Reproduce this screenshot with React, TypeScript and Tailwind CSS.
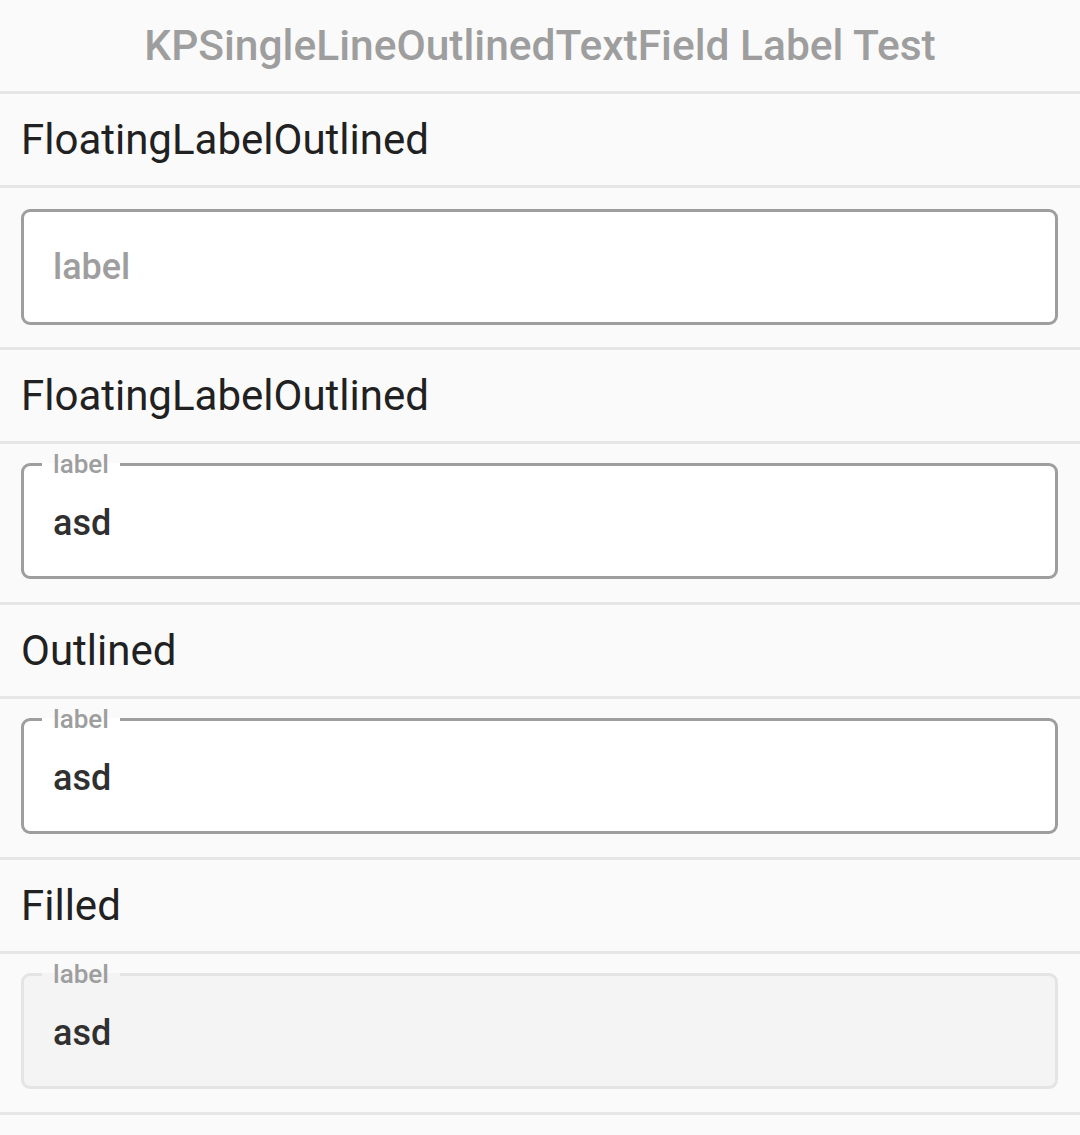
const font = { fontFamily: "Roboto, 'Noto Sans', sans-serif" };

function Divider() {
  return <div className="h-[3px] bg-[#e6e6e6]" />;
}

function Title({ text }: { text: string }) {
  return (
    <div className="flex h-[91px] items-center pl-[21px] text-[42px] text-[#212121]">
      {text}
    </div>
  );
}

function PlaceholderField() {
  return (
    <div className="pt-[21px] pb-[22px] pl-[21px] pr-[22px]">
      <div className="flex h-[116px] items-center rounded-[9px] border-[3px] border-[#9e9e9e] bg-white pl-[29px] text-[36px] font-medium text-[#9e9e9e]">
        label
      </div>
    </div>
  );
}

function LabelledField({ filled }: { filled?: boolean }) {
  return (
    <div className="pt-[7px] pb-[23px] pl-[21px] pr-[22px]">
      <fieldset
        className={
          filled
            ? "m-0 rounded-[9px] border-[3px] border-[#e4e4e4] bg-[#f4f4f4] p-0"
            : "m-0 rounded-[9px] border-[3px] border-[#9e9e9e] bg-white p-0"
        }
      >
        <legend className="ml-[18px] px-[11px] text-[26px] leading-[26px] font-medium text-[#9e9e9e]">
          label
        </legend>
        <div className="flex h-[99px] items-start pt-[25px] pl-[29px] text-[36px] leading-[42px] font-medium text-[#303030]">
          asd
        </div>
      </fieldset>
    </div>
  );
}

export default function App() {
  return (
    <div className="min-h-[1135px] bg-[#fafafa]" style={font}>
      <div className="flex h-[91px] items-center justify-center text-[42.5px] font-medium text-[#9e9e9e]">
        KPSingleLineOutlinedTextField Label Test
      </div>
      <Divider />
      <Title text="FloatingLabelOutlined" />
      <Divider />
      <PlaceholderField />
      <Divider />
      <Title text="FloatingLabelOutlined" />
      <Divider />
      <LabelledField />
      <Divider />
      <Title text="Outlined" />
      <Divider />
      <LabelledField />
      <Divider />
      <Title text="Filled" />
      <Divider />
      <LabelledField filled />
      <Divider />
    </div>
  );
}
